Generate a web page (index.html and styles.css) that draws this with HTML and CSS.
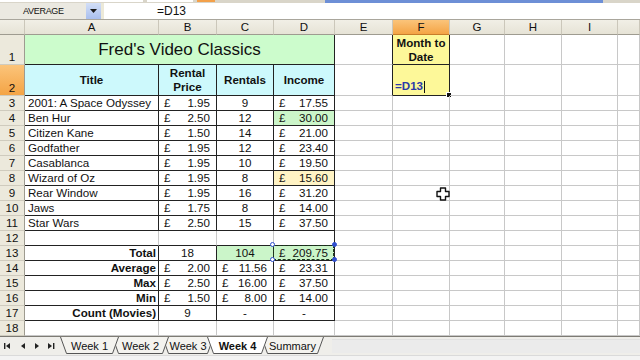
FILE: index.html
```html
<!DOCTYPE html>
<html>
<head>
<meta charset="utf-8">
<title>Fred's Video Classics</title>
<link rel="stylesheet" href="styles.css">
</head>
<body>
<div class="app">
  <div class="top"><span class="tb w1"></span><span class="tb w2"></span><span class="tb or"></span><span class="tb blue"></span></div>
  <div class="fbar">
    <div class="namebox">AVERAGE</div>
    <div class="dd"><svg width="8" height="5" viewBox="0 0 8 5"><polygon points="0,0 7,0 3.5,4" fill="#1a1a1a"/></svg></div>
    <div class="gap"></div>
    <div class="formula">=D13</div>
  </div>
  <div class="sheet">
    <div class="ch"></div><div class="ch">A</div><div class="ch">B</div><div class="ch">C</div><div class="ch">D</div><div class="ch">E</div><div class="ch sel">F</div><div class="ch">G</div><div class="ch">H</div><div class="ch">I</div><div class="ch"></div>

    <div class="rh">1</div><div class="c t title">Fred's Video Classics</div><div class="c eb"></div><div class="c fy hd">Month to<br>Date</div><div class="c"></div><div class="c"></div><div class="c"></div><div class="c"></div>

    <div class="rh sel">2</div><div class="c t cy hd">Title</div><div class="c t cy hd">Rental<br>Price</div><div class="c t cy hd">Rentals</div><div class="c t cy hd">Income</div><div class="c eb"></div><div class="c fy edit"><span class="ed">=D13</span><span class="caret"></span><span class="fh"></span></div><div class="c"></div><div class="c"></div><div class="c"></div><div class="c"></div>

    <div class="rh">3</div><div class="c t txt">2001: A Space Odyssey</div><div class="c t cur"><span>£</span><span>1.95</span></div><div class="c t ctr">9</div><div class="c t cur"><span>£</span><span>17.55</span></div><div class="c"></div><div class="c"></div><div class="c"></div><div class="c"></div><div class="c"></div><div class="c"></div>

    <div class="rh">4</div><div class="c t txt">Ben Hur</div><div class="c t cur"><span>£</span><span>2.50</span></div><div class="c t ctr">12</div><div class="c t cur gr"><span>£</span><span>30.00</span></div><div class="c"></div><div class="c"></div><div class="c"></div><div class="c"></div><div class="c"></div><div class="c"></div>

    <div class="rh">5</div><div class="c t txt">Citizen Kane</div><div class="c t cur"><span>£</span><span>1.50</span></div><div class="c t ctr">14</div><div class="c t cur"><span>£</span><span>21.00</span></div><div class="c"></div><div class="c"></div><div class="c"></div><div class="c"></div><div class="c"></div><div class="c"></div>

    <div class="rh">6</div><div class="c t txt">Godfather</div><div class="c t cur"><span>£</span><span>1.95</span></div><div class="c t ctr">12</div><div class="c t cur"><span>£</span><span>23.40</span></div><div class="c"></div><div class="c"></div><div class="c"></div><div class="c"></div><div class="c"></div><div class="c"></div>

    <div class="rh">7</div><div class="c t txt">Casablanca</div><div class="c t cur"><span>£</span><span>1.95</span></div><div class="c t ctr">10</div><div class="c t cur"><span>£</span><span>19.50</span></div><div class="c"></div><div class="c"></div><div class="c"></div><div class="c"></div><div class="c"></div><div class="c"></div>

    <div class="rh">8</div><div class="c t txt">Wizard of Oz</div><div class="c t cur"><span>£</span><span>1.95</span></div><div class="c t ctr">8</div><div class="c t cur ye"><span>£</span><span>15.60</span></div><div class="c"></div><div class="c"></div><div class="c"></div><div class="c"></div><div class="c"></div><div class="c"></div>

    <div class="rh">9</div><div class="c t txt">Rear Window</div><div class="c t cur"><span>£</span><span>1.95</span></div><div class="c t ctr">16</div><div class="c t cur"><span>£</span><span>31.20</span></div><div class="c"></div><div class="c"></div><div class="c"></div><div class="c"></div><div class="c"></div><div class="c"></div>

    <div class="rh">10</div><div class="c t txt">Jaws</div><div class="c t cur"><span>£</span><span>1.75</span></div><div class="c t ctr">8</div><div class="c t cur"><span>£</span><span>14.00</span></div><div class="c"></div><div class="c"></div><div class="c"></div><div class="c"></div><div class="c"></div><div class="c"></div>

    <div class="rh">11</div><div class="c t txt">Star Wars</div><div class="c t cur"><span>£</span><span>2.50</span></div><div class="c t ctr">15</div><div class="c t cur"><span>£</span><span>37.50</span></div><div class="c"></div><div class="c"></div><div class="c"></div><div class="c"></div><div class="c"></div><div class="c"></div>

    <div class="rh">12</div><div class="c t lt"></div><div class="c t lt"></div><div class="c t lt"></div><div class="c t"></div><div class="c"></div><div class="c"></div><div class="c"></div><div class="c"></div><div class="c"></div><div class="c"></div>

    <div class="rh">13</div><div class="c t rt">Total</div><div class="c t ctr">18</div><div class="c t ctr gr">104</div><div class="c t cur gr ants"><span>£</span><span>209.75</span><i class="hd1 tl"></i><i class="hd1 bl"></i><i class="hd1 tr"></i><i class="hd1 br"></i></div><div class="c"></div><div class="c"></div><div class="c"></div><div class="c"></div><div class="c"></div><div class="c"></div>

    <div class="rh">14</div><div class="c t rt">Average</div><div class="c t cur"><span>£</span><span>2.00</span></div><div class="c t cur"><span>£</span><span>11.56</span></div><div class="c t cur"><span>£</span><span>23.31</span></div><div class="c"></div><div class="c"></div><div class="c"></div><div class="c"></div><div class="c"></div><div class="c"></div>

    <div class="rh">15</div><div class="c t rt">Max</div><div class="c t cur"><span>£</span><span>2.50</span></div><div class="c t cur"><span>£</span><span>16.00</span></div><div class="c t cur"><span>£</span><span>37.50</span></div><div class="c"></div><div class="c"></div><div class="c"></div><div class="c"></div><div class="c"></div><div class="c"></div>

    <div class="rh">16</div><div class="c t rt">Min</div><div class="c t cur"><span>£</span><span>1.50</span></div><div class="c t cur"><span>£</span><span>8.00</span></div><div class="c t cur"><span>£</span><span>14.00</span></div><div class="c"></div><div class="c"></div><div class="c"></div><div class="c"></div><div class="c"></div><div class="c"></div>

    <div class="rh">17</div><div class="c t rt">Count (Movies)</div><div class="c t ctr">9</div><div class="c t ctr">-</div><div class="c t ctr">-</div><div class="c"></div><div class="c"></div><div class="c"></div><div class="c"></div><div class="c"></div><div class="c"></div>

    <div class="rh">18</div><div class="c"></div><div class="c"></div><div class="c"></div><div class="c"></div><div class="c"></div><div class="c"></div><div class="c"></div><div class="c"></div><div class="c"></div><div class="c"></div>
  </div>
  <div class="tabbar">
    <div class="nav">
      <svg width="60" height="18" viewBox="0 0 60 18">
        <rect x="4" y="6" width="1.4" height="6" fill="#222"/>
        <polygon points="10,6 10,12 6,9" fill="#222"/>
        <polygon points="25,6 25,12 21,9" fill="#222"/>
        <polygon points="35,6 35,12 39,9" fill="#222"/>
        <polygon points="48,6 48,12 52,9" fill="#222"/>
        <rect x="53" y="6" width="1.4" height="6" fill="#222"/>
      </svg>
    </div>
    <div class="tabs">
      <div class="tab z5" style="width:59px"><svg width="59" height="17" viewBox="0 0 59 17"><polygon points="0,0 59,0 53,16.5 6,16.5" class="tf"/><polyline points="0.5,0 6.5,16.5 52.5,16.5 58.5,0" class="ts"/></svg><span>Week 1</span></div>
      <div class="tab z4" style="width:57px"><svg width="57" height="17" viewBox="0 0 57 17"><polygon points="0,0 57,0 51,16.5 6,16.5" class="tf"/><polyline points="0.5,0 6.5,16.5 50.5,16.5 56.5,0" class="ts"/></svg><span>Week 2</span></div>
      <div class="tab z3" style="width:52px"><svg width="52" height="17" viewBox="0 0 52 17"><polygon points="0,0 52,0 46,16.5 6,16.5" class="tf"/><polyline points="0.5,0 6.5,16.5 45.5,16.5 51.5,0" class="ts"/></svg><span>Week 3</span></div>
      <div class="tab act" style="width:61px"><svg width="61" height="17" viewBox="0 0 61 17"><polygon points="0,0 61,0 55,16.5 6,16.5" class="tf"/><polyline points="0.5,0 6.5,16.5 54.5,16.5 60.5,0" class="ts"/></svg><span>Week 4</span></div>
      <div class="tab z1" style="width:63px"><svg width="63" height="17" viewBox="0 0 63 17"><polygon points="0,0 63,0 57,16.5 6,16.5" class="tf"/><polyline points="0.5,0 6.5,16.5 56.5,16.5 62.5,0" class="ts"/></svg><span>Summary</span></div>
    </div>
    <div class="hscroll"></div>
  </div>
  <div class="status"></div>
</div>
<svg class="mouse" width="14" height="14" viewBox="0 0 14 14"><polygon points="4.5,1 9.5,1 9.5,4.5 13,4.5 13,9.5 9.5,9.5 9.5,13 4.5,13 4.5,9.5 1,9.5 1,4.5 4.5,4.5" fill="#fff" stroke="#111" stroke-width="1.4" stroke-linejoin="round"/></svg>
</body>
</html>
```
FILE: styles.css
```css
html, body {
  margin: 0;
  padding: 0;
}
body {
  width: 640px;
  height: 360px;
  overflow: hidden;
  position: relative;
  background: #fff;
  font-family: "Liberation Sans", Arial, sans-serif;
  color: #111;
}
.app {
  display: flex;
  flex-direction: column;
  height: 360px;
}
.top {
  height: 3px;
  background: #d9d5c9;
  display: flex;
}
.tb { display: block; height: 2px; }
.w1 { width: 143px; background: #fff; }
.w2 { width: 46px; margin-left: 4px; background: #fff; }
.or { width: 18px; margin-left: 4px; background: #f3a04a; }
.blue { width: 278px; margin-left: 110px; height: 3px; background: #6d8fd6; }

.fbar {
  height: 17px;
  box-sizing: border-box;
  display: flex;
  background: #ece9d8;
  border-bottom: 1px solid #a9a69c;
}
.namebox {
  width: 86px;
  box-sizing: border-box;
  padding-left: 23px;
  display: flex;
  align-items: center;
  font-size: 9px;
  letter-spacing: -0.3px;
  background: #ebe9e1;
}
.dd {
  width: 15px;
  display: flex;
  align-items: center;
  justify-content: center;
  background: linear-gradient(#d3dff7, #a9bfee);
}
.gap { width: 3px; }
.formula {
  flex: 1;
  background: #fff;
  padding-left: 53px;
  display: flex;
  align-items: center;
  font-size: 12px;
}

.sheet {
  display: grid;
  grid-template-columns: 25px 134px 58px 57px 61px 58px 57px 55px 57px 56px 22px;
  grid-template-rows: 15px 30px 31px repeat(16, 15px);
  height: 316px;
}
.ch {
  box-sizing: border-box;
  background: linear-gradient(#f1efe6, #e6e3d6);
  border-right: 1px solid #cbc7ba;
  border-bottom: 1px solid #9e9b90;
  display: flex;
  align-items: center;
  justify-content: center;
  font-size: 11.5px;
}
.ch.sel { background: linear-gradient(#fbc47a, #f4a445); border-bottom-color: #c77d2a; }
.rh {
  box-sizing: border-box;
  background: #ece9dc;
  border-right: 1px solid #9e9b90;
  border-bottom: 1px solid #cfcbbe;
  display: flex;
  align-items: flex-end;
  justify-content: center;
  padding-bottom: 0;
  font-size: 11.6px;
  line-height: 14px;
}
.rh.sel { background: linear-gradient(#fbc47a, #f4a445); }

.c {
  box-sizing: border-box;
  border-right: 1px solid #c8c8c8;
  border-bottom: 1px solid #c8c8c8;
  display: flex;
  align-items: center;
  white-space: nowrap;
  overflow: visible;
  font-size: 11.6px;
  line-height: 14px;
  position: relative;
}
.t { border-right-color: #222; border-bottom-color: #222; }
.t.lt { border-right-color: #c8c8c8; }
.eb { border-right-color: #222; }
.title {
  grid-column: span 4;
  background: #ccfccc;
  justify-content: center;
  font-size: 17px;
  line-height: 20px;
}
.cy { background: #cdf9fc; }
.hd { justify-content: center; text-align: center; font-weight: bold; line-height: 14px; }
.fy { background: #fdf899; border-right-color: #222; border-bottom-color: #222; }
.txt { padding-left: 3px; }
.cur { justify-content: space-between; padding: 0 6px 0 5px; }
.ctr { justify-content: center; }
.rt { justify-content: flex-end; padding-right: 2px; font-weight: bold; }
.gr { background: #cbf5c9; }
.ye { background: #fff3c4; }

.edit { align-items: flex-end; padding: 0 0 2px 2px; }
.ed { color: #2b3aa8; font-weight: bold; }
.caret { width: 1px; height: 12px; background: #111; margin-left: 1px; margin-bottom: 0; }
.fh {
  position: absolute;
  right: -3px;
  bottom: -3px;
  width: 4px;
  height: 4px;
  background: #111;
  border: 1px solid #fff;
}

.ants::after {
  content: "";
  position: absolute;
  left: -1px;
  top: -1px;
  right: 0;
  bottom: 0;
  border: 1px dashed #1d3b1d;
}
.hd1 {
  position: absolute;
  width: 5px;
  height: 5px;
  box-sizing: border-box;
  border-radius: 50%;
  border: 1px solid #2f4fcf;
  background: #fff;
  z-index: 2;
}
.hd1.tl { left: -4px; top: -4px; }
.hd1.bl { left: -4px; bottom: -2px; }
.hd1.tr { right: -3px; top: -4px; background: #2f4fcf; }
.hd1.br { right: -3px; bottom: -2px; background: #2f4fcf; }

.tabbar {
  height: 19px;
  box-sizing: border-box;
  display: flex;
  background: #efeeea;
  border-top: 1px solid #7d7b74;
}
.nav { width: 60px; }
.tabs { display: flex; }
.tab {
  position: relative;
  height: 17px;
  display: flex;
  align-items: center;
  justify-content: center;
  font-size: 11px;
  margin-left: -7px;
}
.tab:first-child { margin-left: 0; }
.tab svg { position: absolute; left: 0; top: 0; }
.tab span { position: relative; }
.tf { fill: #f4f3ef; }
.ts { fill: none; stroke: #555; stroke-width: 1; }
.tab.act .tf { fill: #fff; }
.tab.act { font-weight: bold; z-index: 10; }
.z5 { z-index: 5; }
.z4 { z-index: 4; }
.z3 { z-index: 3; }
.z1 { z-index: 1; }
.hscroll {
  flex: 1;
  margin-left: 8px;
  margin-top: 2px;
  height: 13px;
  background: #ebebeb;
  border-top: 1px solid #e0e0e0;
}
.status {
  height: 5px;
  background: #f3f3f3;
  border-top: 1px solid #dadada;
  box-sizing: border-box;
}
.mouse {
  position: absolute;
  left: 436px;
  top: 187px;
}
```
